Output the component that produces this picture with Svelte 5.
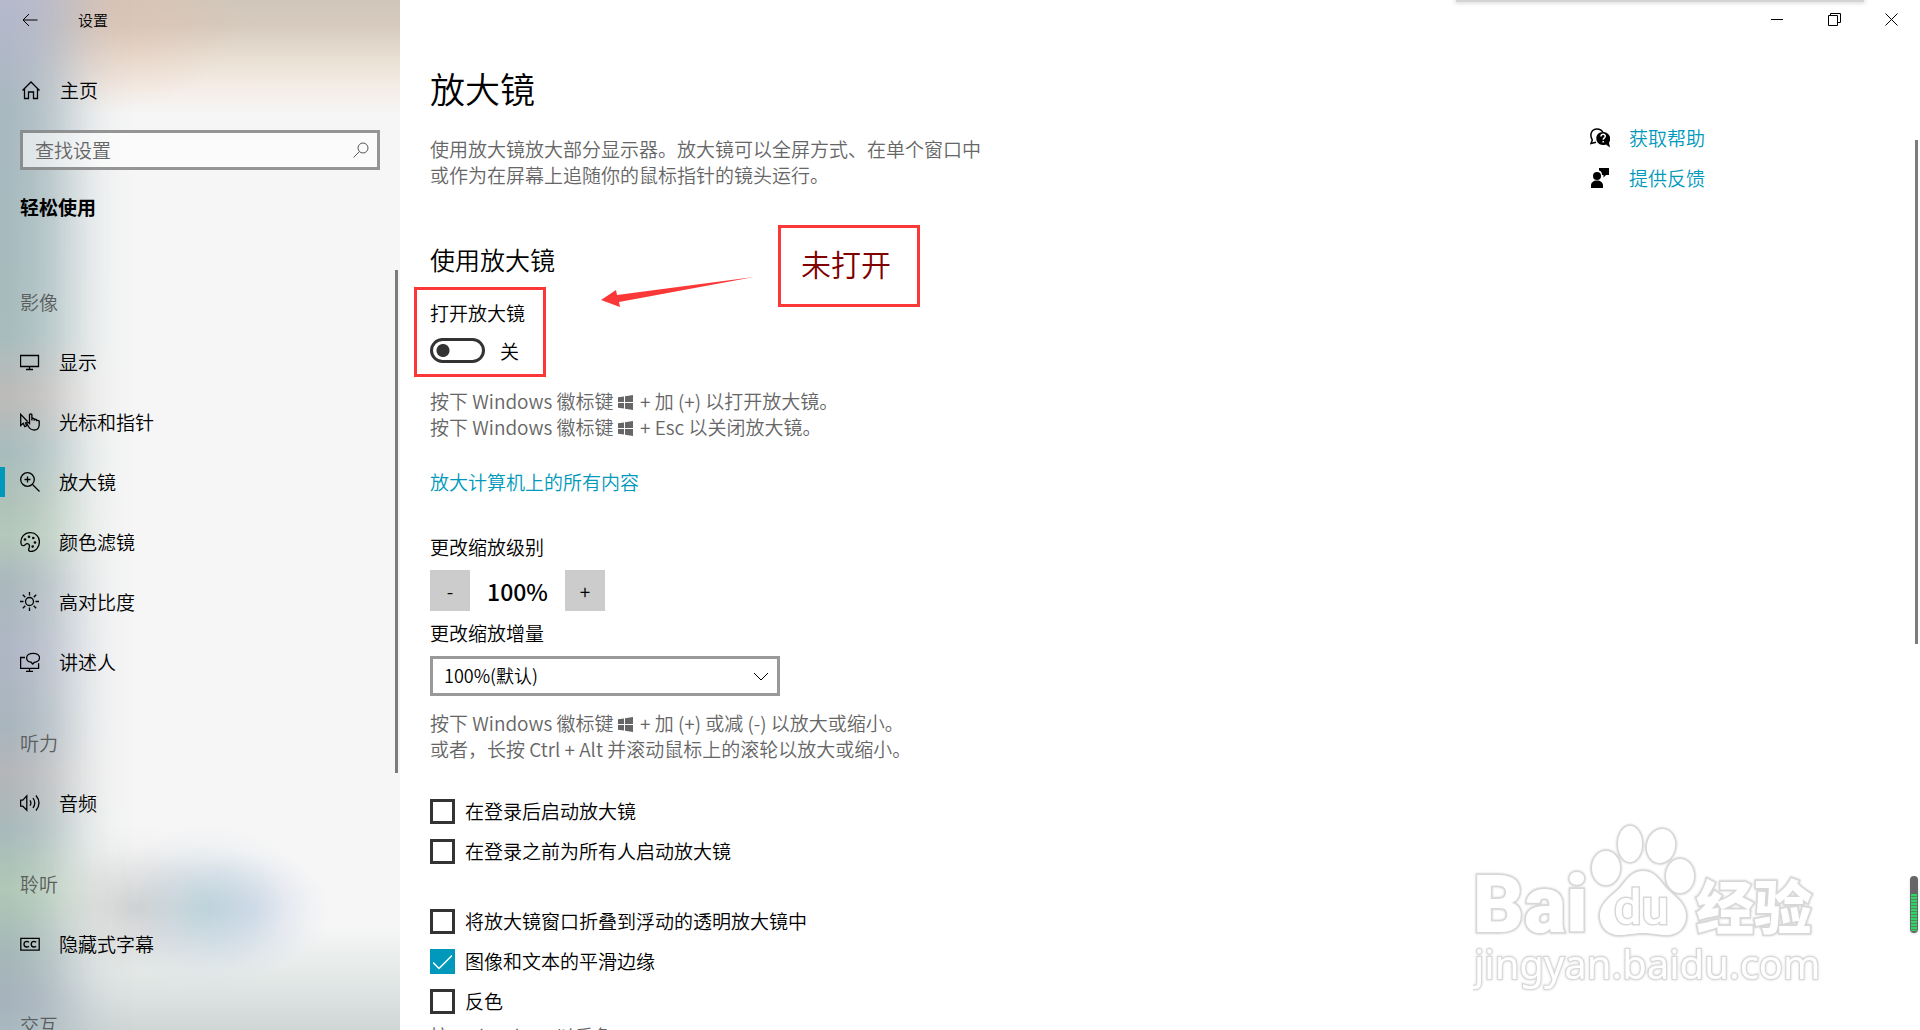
<script>
  const groups = [
    {
      title: '影像',
      items: [
        { label: '显示', icon: 'display' },
        { label: '光标和指针', icon: 'cursor' },
        { label: '放大镜', icon: 'magnifier', selected: true },
        { label: '颜色滤镜', icon: 'palette' },
        { label: '高对比度', icon: 'sun' },
        { label: '讲述人', icon: 'narrator' }
      ]
    },
    { title: '听力', items: [{ label: '音频', icon: 'audio' }] },
    { title: '聆听', items: [{ label: '隐藏式字幕', icon: 'cc' }] },
    { title: '交互', items: [] }
  ];

  let magnifierOn = $state(false);
  let zoom = $state(100);
  let startup = $state([
    { label: '在登录后启动放大镜', checked: false },
    { label: '在登录之前为所有人启动放大镜', checked: false }
  ]);
  let view = $state([
    { label: '将放大镜窗口折叠到浮动的透明放大镜中', checked: false },
    { label: '图像和文本的平滑边缘', checked: true },
    { label: '反色', checked: false }
  ]);
</script>

{#snippet winLogo()}
  <svg class="winlogo" viewBox="0 0 15 15" aria-hidden="true">
    <path d="M0 2.2 6 1.4V7H0zM7 1.2 15 0v7H7zM0 8h6v5.6l-6-.8zM7 8h8v7l-8-1.2z" fill="currentColor" />
  </svg>
{/snippet}

{#snippet option(item)}
  <label class="check">
    <input type="checkbox" bind:checked={item.checked} />
    <span>{item.label}</span>
  </label>
{/snippet}

<div class="window">
  <aside class="sidebar">
    <header class="apptitle">
      <button class="back" aria-label="返回">
        <svg viewBox="0 0 16 14"><path d="M15.500 7H1M7 1 1 7l6 6" /></svg>
      </button>
      <span>设置</span>
    </header>

    <a class="navitem home" href="#home">
      <svg viewBox="0 0 20 20"><path d="M1.500 10.500 10 2l8.500 8.500M3.500 9v9.500h4V12h5v6.500h4V9" /></svg>
      <span>主页</span>
    </a>

    <div class="search">
      <input type="text" placeholder="查找设置" aria-label="查找设置" />
      <svg viewBox="0 0 16 16"><circle cx="10" cy="6" r="5" /><path d="M6.500 9.500.5 15.500" /></svg>
    </div>

    <h2 class="category">轻松使用</h2>

    <nav>
      {#each groups as group}
        <section>
          <h3>{group.title}</h3>
          {#each group.items as item}
            <a class="navitem" class:selected={item.selected} href="#{item.icon}">
              <svg viewBox="0 0 20 20">
                {#if item.icon === 'display'}
                  <path d="M.5 3.500h18v11H.5zM9.500 14.500v2.500M6 17.500h7" />
                {:else if item.icon === 'cursor'}
                  <path d="M7.500 9.500.7 2.300v11.200l2.500-2.200 1.600 3.400 2-1-1.600-3.300" />
                  <path d="M9.500 11.500V2.700q1.200-1.700 2.400 0v5.800V6.700q1.200-1 2.300.3v1.700V7.500q1.200-.9 2.300.3v1.500-.7q1.300-.8 2.700.5v3.600q-.2 5.300-5 5.300-3.700 0-5.700-3.500L6.600 11q.5-1.300 1.700-.5z" />
                {:else if item.icon === 'magnifier'}
                  <circle cx="7.500" cy="7.500" r="6.800" />
                  <path d="m12.500 12.500 7 7M7.500 4.500v6M4.500 7.500h6" />
                {:else if item.icon === 'palette'}
                  <path d="M1.200 12.200C-.3 5.500 4.500.7 10.500.7c5.300 0 8.900 4 8.900 9.100 0 6-4.200 9.700-8.300 9.700-2.700 0-2.800-1.600-2-3.600.8-2.200.1-4.700-2.300-4.300-1.600.3-1.400 1.800-2.900 2-1.400.2-2.400-.3-2.700-1.400z" />
                  <g class="dots"><circle cx="5" cy="7.500" r="1.300" /><circle cx="9" cy="4.800" r="1.300" /><circle cx="13.300" cy="6" r="1.300" /><circle cx="15" cy="10.500" r="1.300" /><circle cx="12.700" cy="14.500" r="1.300" /></g>
                {:else if item.icon === 'sun'}
                  <circle cx="9.500" cy="9.500" r="4" />
                  <path d="M9.500 0v3.500M9.500 15.500V19M0 9.500h3.500M15.500 9.500H19M2.800 2.800l2.500 2.500M13.700 13.700l2.500 2.500M16.200 2.800l-2.500 2.500M5.300 13.700l-2.500 2.500" />
                {:else if item.icon === 'narrator'}
                  <path d="M5 5.500H.6v10.800h18v-5M9.500 16.500v2.300M6 19.300h7" />
                  <path d="M11 10.200C8 9.800 6.600 8 6.600 6c0-2.800 2.700-4.600 6.500-4.600S19.500 3.200 19.500 5.700c0 2.400-2 4.200-5.200 4.600L12.800 12z" />
                {:else if item.icon === 'audio'}
                  <path d="M.6 7.200h2.200l4-4.300v14.300l-4-4H.6zM10 7.300q1.800 2.700 0 5.400M13 5q3.500 5 0 10M16 2.500q6 7.500 0 15" />
                {:else}
                  <path d="M.8 4.300h18.400v11.900H.8zM9 8.200Q8 7.400 6.800 7.400 4 7.600 4 10.200T6.800 13q1.200 0 2.200-.6M16.200 8.200q-1-.8-2.200-.8-2.800.2-2.800 2.800T14 13q1.200 0 2.200-.6" />
                {/if}
              </svg>
              <span>{item.label}</span>
            </a>
          {/each}
        </section>
      {/each}
    </nav>
    <div class="thumb side"></div>
  </aside>

  <main>
    <div class="content">
      <h1>放大镜</h1>
      <p class="desc">使用放大镜放大部分显示器。放大镜可以全屏方式、在单个窗口中<br />或作为在屏幕上追随你的鼠标指针的镜头运行。</p>

      <h2>使用放大镜</h2>
      <div class="power">
        <label for="power">打开放大镜</label>
        <div class="switchrow">
          <input id="power" class="switch" type="checkbox" role="switch" bind:checked={magnifierOn} />
          <span>{magnifierOn ? '开' : '关'}</span>
        </div>
        <div class="frame"></div>
        <svg class="arrow" viewBox="0 0 154 32" aria-hidden="true">
          <path d="M0 24 15 14l1 5L153 1 18 26l1 5z" />
        </svg>
        <div class="callout">未打开</div>
      </div>
      <p class="hint">按下 Windows 徽标键 {@render winLogo()} + 加 (+) 以打开放大镜。<br />按下 Windows 徽标键 {@render winLogo()} + Esc 以关闭放大镜。</p>

      <a class="link" href="#all">放大计算机上的所有内容</a>

      <div class="fieldname">更改缩放级别</div>
      <div class="stepper">
        <button aria-label="缩小" onclick={() => (zoom = Math.max(100, zoom - 100))}>-</button>
        <output>{zoom}%</output>
        <button aria-label="放大" onclick={() => (zoom += 100)}>+</button>
      </div>
      <label class="fieldname" for="step">更改缩放增量</label>
      <div class="combo">
        <select id="step">
          <option>100%(默认)</option>
          <option>200%</option>
        </select>
        <svg viewBox="0 0 16 9" aria-hidden="true"><path d="m1 1 7 7 7-7" /></svg>
      </div>
      <p class="hint zoomhint">按下 Windows 徽标键 {@render winLogo()} + 加 (+) 或减 (-) 以放大或缩小。<br />或者，长按 Ctrl + Alt 并滚动鼠标上的滚轮以放大或缩小。</p>

      <div class="checks">
        {#each startup as item}{@render option(item)}{/each}
      </div>
      <div class="checks">
        {#each view as item}{@render option(item)}{/each}
      </div>
      <p class="hint last">按 Ctrl + Alt + I 以反色</p>
    </div>

    <div class="rail">
      <div class="controls">
        <button aria-label="最小化"><svg viewBox="0 0 13 13"><path d="M0 6.500h12" /></svg></button>
        <button aria-label="还原"><svg viewBox="0 0 13 13"><path d="M.5 2.500h9v10h-9zM2.500 2.500v-2h10v9h-3" /></svg></button>
        <button aria-label="关闭"><svg viewBox="0 0 13 13"><path d="m.5.5 12 12M12.500.5l-12 12" /></svg></button>
      </div>
      <a class="support" href="#help">
        <svg viewBox="0 0 20 20">
          <path class="outline" d="M6 14.300 1 15.500l1.300-3.500C-1 6 2 1 7 1c3 0 5 1.500 6 3.500" />
          <path d="M13 4c-4 0-6.700 2.900-6.700 6.300 0 4 2.900 6.700 6.700 6.700 1 0 2-.2 2.900-.6L20 19.500l-1-4.800c.8-1.200 1.200-2.600 1.200-4.200C20.200 7 17 4 13 4z" />
          <path class="question" d="M11 8.500c0-3 4.500-2.800 4.300-.2-.1 1.500-2.100 1.600-2.100 3.400M13.200 13v1.500" />
        </svg>
        <span>获取帮助</span>
      </a>
      <a class="support" href="#feedback">
        <svg viewBox="0 0 20 20">
          <circle cx="7" cy="8" r="4" />
          <path d="M1 20v-2.500c0-3 2.500-5 6-5s6 2 6 5V20zM9 0h10v7h-3l-2.500 2.500V7H12C12 4.500 11 3 9 2.500z" />
        </svg>
        <span>提供反馈</span>
      </a>
    </div>
  </main>

  <div class="behind"></div>
  <div class="thumb page"></div>
  <div class="meter"><i></i></div>

  <svg class="watermark" viewBox="0 0 350 170" role="img" aria-label="Baidu 经验">
    <g class="shade">
      <text class="latin" x="0" y="109" font-size="79">Bai</text>
      <ellipse cx="133" cy="45" rx="14" ry="17" />
      <ellipse cx="157" cy="21" rx="12" ry="18" />
      <ellipse cx="188" cy="23" rx="14" ry="17" transform="rotate(12 188 23)" />
      <ellipse cx="207" cy="53" rx="14" ry="17" />
      <path d="M170 48c-12 0-17 10-23 17-8 8-20 15-20 28 0 11 8 19 19 19 9 0 15-2 24-2s15 2 24 2c11 0 19-8 19-19 0-13-12-20-20-28-6-7-11-17-23-17z" />
      <text class="du" x="141" y="101" font-size="49">du</text>
      <text class="han" x="223" y="106" font-size="58">经验</text>
      <text class="url" x="1" y="156" font-size="40">jingyan.baidu.com</text>
    </g>
  </svg>
</div>

<style>
  :global(body) {
    margin: 0;
    background: #fff;
  }
  .window {
    position: relative;
    display: flex;
    height: 100vh;
    overflow: hidden;
    background: #fff;
    color: #000;
    font: 19px/26px 'Noto Sans CJK SC', sans-serif;
    font-weight: 350;
  }
  h1, h2, h3, p { margin: 0; font-weight: inherit; }
  a { text-decoration: none; color: inherit; }
  button, input, select { font: inherit; color: inherit; padding: 0; margin: 0; border: 0; border-radius: 0; background: none; }
  svg { fill: none; stroke: currentColor; flex: none; }

  .sidebar {
    position: relative;
    flex: 0 0 400px;
    box-sizing: border-box;
    overflow: hidden;
    isolation: isolate;
    background:
      radial-gradient(ellipse 100px 84px at 210px 908px, rgba(160, 196, 206, .58), rgba(165, 195, 212, .34) 40%, rgba(170, 195, 215, .08) 75%, transparent),
      radial-gradient(ellipse 110px 84px at 135px 908px, rgba(175, 175, 175, .5), rgba(180, 180, 180, .25) 45%, rgba(180, 180, 180, .06) 75%, transparent),
      radial-gradient(ellipse 80px 60px at 250px 910px, rgba(190, 200, 228, .4), transparent),
      radial-gradient(ellipse 120px 100px at 120px 10px, rgba(228, 190, 175, .45), transparent),
      linear-gradient(to bottom, #d0c7ba 0, #d5cabd 25px, #e9dfd3 58px, #f4ece5 85px, rgba(247, 247, 247, 0) 115px),
      linear-gradient(to bottom, rgba(219, 225, 224, 0) 925px, #e4e9e8 975px, #d8dfde 1005px, #cfd6d6 1030px),
      #f6f6f6;
  }
  .sidebar::before {
    content: '';
    position: absolute;
    z-index: -1;
    inset: 0 auto 0 0;
    width: 140px;
    background: linear-gradient(to bottom, #b5b9cc 0, #afb8c6 60px, #a9b9c0 110px, #a7bbbf 220px, #a8bcbd 335px, #bdbbb9 395px, #a9bcbd 450px, #afc2b9 500px, #b4c8bb 535px, #abb9bd 580px, #afb7c5 650px, #a9b5bd 730px, #b5b6b9 772px, #a9babb 830px, #b0c8b6 890px, #a6b8b8 950px, #a6b2bd 1000px, #a9b9bf 1030px);
    mask-image: linear-gradient(to right, #000 10px, rgba(0, 0, 0, .9) 32px, rgba(0, 0, 0, .72) 52px, rgba(0, 0, 0, .45) 72px, rgba(0, 0, 0, .2) 92px, rgba(0, 0, 0, .06) 112px, transparent 135px);
  }
  .apptitle {
    display: flex;
    align-items: center;
    height: 40px;
    font-size: 15px;
  }
  .back { width: 60px; height: 40px; margin-right: 18px; }
  .back svg { width: 16px; height: 14px; display: block; margin-left: 22px; }
  .navitem {
    position: relative;
    display: flex;
    align-items: center;
    gap: 19px;
    height: 60px;
    padding-left: 20px;
  }
  .navitem svg { width: 20px; height: 20px; stroke-width: 1.300; }
  .navitem .dots { fill: #000; stroke: none; }
  .navitem.selected::before {
    content: '';
    position: absolute;
    left: 0;
    width: 5px;
    height: 30px;
    background: #0099bc;
  }
  .navitem.home { margin-top: 20px; padding-left: 21px; }
  .search {
    display: flex;
    align-items: center;
    box-sizing: border-box;
    height: 40px;
    margin: 10px 20px 0;
    padding: 0 8px 0 12px;
    border: 3px solid rgba(100, 100, 100, .68);
    background: rgba(255, 255, 255, .6);
  }
  .search input { flex: 1; min-width: 0; outline: 0; }
  .search input::placeholder { color: #666; opacity: 1; }
  .search svg { width: 16px; height: 16px; color: #555; }
  .category { margin: 24px 20px 0; font-size: 19px; font-weight: 700; }
  section h3 { height: 60px; line-height: 60px; margin: 21px 20px 0; font-size: 19px; color: #5a5e5e; }
  section:first-child h3 { margin-top: 52px; }

  .thumb { position: absolute; width: 3px; background: #7b7b7b; }
  .side { right: 2px; top: 270px; height: 503px; }
  .page { right: 2px; top: 140px; height: 504px; }

  main { flex: 1; display: flex; justify-content: space-between; min-width: 0; }
  .content { padding: 65px 0 0 30px; white-space: nowrap; }
  h1 { font-size: 35px; line-height: 46px; }
  .desc { margin-top: 25px; color: #666; }
  .content h2 { margin-top: 54px; font-size: 25px; line-height: 34px; }
  .power { position: relative; width: max-content; margin-top: 24px; }
  .power label { display: block; }
  .switchrow { display: flex; align-items: center; gap: 15px; height: 25px; margin-top: 12px; }
  .switch {
    appearance: none;
    box-sizing: border-box;
    width: 55px;
    height: 25px;
    border: 3px solid #333;
    border-radius: 13px;
    background: radial-gradient(circle at 10px 50%, #333 6px, transparent 7px);
  }
  .switch:checked {
    border-color: #0099bc;
    background: radial-gradient(circle at 39px 50%, #fff 6px, #0099bc 7px);
  }
  .frame { position: absolute; left: -16px; top: -13px; width: 126px; height: 84px; border: 3px solid #fa3838; pointer-events: none; }
  .arrow { position: absolute; left: 171px; top: -24px; width: 154px; height: 32px; fill: #fa3838; stroke: none; }
  .callout {
    position: absolute;
    left: 348px;
    top: -75px;
    padding: 15px 26px 21px 20px;
    border: 3px solid #fa3838;
    color: #800000;
    font-size: 30px;
    line-height: 40px;
  }
  .hint { margin-top: 25px; color: #666; }
  .winlogo { width: 15px; height: 15px; margin-right: 3px; stroke: none; vertical-align: -1px; }
  .link { display: block; width: max-content; margin: 29px 0 39px; color: #0099bc; }
  .fieldname { display: block; }
  .stepper { display: flex; align-items: center; margin: 10px 0 9px; }
  .stepper button { width: 40px; height: 41px; background: #ccc; }
  .stepper output { width: 95px; text-align: center; font-size: 23px; font-weight: 500; }
  .combo { position: relative; width: 350px; margin-top: 10px; }
  .combo select {
    appearance: none;
    display: block;
    box-sizing: border-box;
    width: 100%;
    height: 40px;
    padding: 0 40px 2px 11px;
    border: 3px solid #999;
    background: #fff;
    font-size: 18px;
  }
  .combo svg { position: absolute; right: 11px; top: 16px; width: 16px; height: 9px; pointer-events: none; }
  .zoomhint { margin-top: 14px; }
  .checks { margin-top: 30px; }
  .zoomhint + .checks { margin-top: 29px; }
  .check { display: flex; align-items: center; gap: 10px; height: 40px; width: max-content; }
  .check input {
    appearance: none;
    box-sizing: border-box;
    width: 25px;
    height: 25px;
    border: 3px solid #333;
  }
  .check input:checked {
    border-color: #0099bc;
    background: #0099bc url("data:image/svg+xml,%3Csvg xmlns='http://www.w3.org/2000/svg' viewBox='0 0 19 19'%3E%3Cpath d='M0 10.500l6 6L19 3.500' fill='none' stroke='white' stroke-width='1.500'/%3E%3C/svg%3E") center / 19px 19px no-repeat;
  }
  .hint.last { margin-top: 2px; }

  .rail { flex: 0 0 330px; }
  .controls { display: flex; justify-content: flex-end; height: 39px; margin-bottom: 79px; }
  .controls button { width: 57px; display: grid; place-items: center; }
  .controls svg { width: 13px; height: 13px; }
  .support { display: flex; align-items: center; gap: 19px; height: 40px; width: max-content; color: #0099bc; }
  .support svg { width: 20px; height: 20px; fill: #000; stroke: none; }
  .support .outline { fill: none; stroke: #000; stroke-width: 1.500; }
  .support .question { fill: none; stroke: #fff; stroke-width: 1.500; }

  .behind { position: absolute; top: 0; right: 56px; width: 408px; height: 2px; background: #d4d4d4; box-shadow: 0 0 4px 1px #d4d4d4; }
  .meter {
    position: absolute;
    right: 2px;
    bottom: 97px;
    width: 8px;
    height: 57px;
    border-radius: 4px;
    overflow: hidden;
    background: #666;
    box-shadow: 0 1px 3px #ddd;
  }
  .meter i { position: absolute; inset: 18px 1px 2px; background: repeating-linear-gradient(#2fd566 0 2px, #4c8a60 2px 3px); }

  .watermark { position: absolute; right: 97px; bottom: 37px; width: 350px; height: 170px; stroke: none; pointer-events: none; }
  .shade { fill: #fff; stroke: #d8d8d8; stroke-width: 3; paint-order: stroke; filter: drop-shadow(0 0 1px #ccc); }
  .shade text { font-family: Roboto, sans-serif; }
  .shade .latin { font-weight: 900; }
  .shade .du { font-weight: 500; }
  .shade .han { font-family: 'Noto Sans CJK SC', sans-serif; font-weight: 900; }
  .shade .url { font-family: 'Noto Sans', sans-serif; font-weight: 400; stroke-width: 2; }
</style>
